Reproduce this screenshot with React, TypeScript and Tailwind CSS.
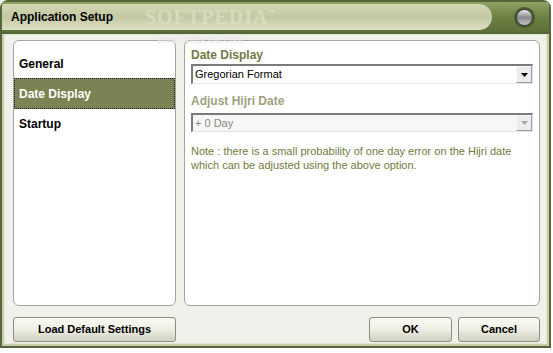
import React from "react";

const sans = { fontFamily: "'Liberation Sans', Arial, sans-serif" };

function Select({ value, disabled, h }: { value: string; disabled?: boolean; h: string }) {
  return (
    <div
      className={`flex ${h} items-stretch border border-t-2 border-l-2 border-t-[#7a7a7a] border-l-[#7a7a7a] border-b-[#e4e4e4] border-r-[#e4e4e4] ${
        disabled ? "bg-[#f7f7f5]" : "bg-white"
      }`}
    >
      <div
        className={`flex flex-1 items-center pl-[2px] text-[11px] ${disabled ? "text-[#8a8a8a]" : "text-black"}`}
      >
        {value}
      </div>
      <div className="flex w-[16px] items-center justify-center border border-[#f8f8f8] border-b-[#9a9a9a] border-r-[#9a9a9a] bg-[#ececec]">
        <svg width="7" height="4" viewBox="0 0 7 4">
          <path d="M0 0 H7 L3.5 4 Z" fill={disabled ? "#a8a8a8" : "#000"} />
        </svg>
      </div>
    </div>
  );
}

function Button({ children, className }: { children: React.ReactNode; className?: string }) {
  return (
    <div
      className={`flex h-[25px] items-center justify-center rounded-[3px] border border-[#8d8d82] bg-gradient-to-b from-[#fbfbf6] via-[#eeeee4] to-[#cfd0bf] text-[11px] font-bold text-black ${className ?? ""}`}
    >
      {children}
    </div>
  );
}

export default function App() {
  return (
    <div className="relative h-[353px] w-[553px] overflow-hidden bg-white" style={sans}>
      <div className="flex h-[348px] w-[551px] flex-col rounded-t-[8px] border-2 border-[#55673a] bg-[#c9cdaa]">
        {/* Title bar */}
        <div className="flex h-[30px] items-center bg-gradient-to-b from-[#8ea363] via-[#6c8143] to-[#5d7039] pr-[14px]">
          <div className="mr-[22px] flex h-[26px] flex-1 items-center rounded-tl-[6px] rounded-r-[40px] bg-gradient-to-b from-[#d4d8b6] via-[#c3c8a2] to-[#dde0c4] pl-[9px]">
            <span className="text-[12px] font-bold text-black">Application Setup</span>
            <span
              className="ml-[32px] text-[20px] font-bold tracking-[1px] text-[#e2e5cf] opacity-60"
              style={{ fontFamily: "'Liberation Serif', serif" }}
            >
              SOFTPEDIA
            </span>
            <span className="mb-[10px] text-[6px] text-[#e7e9d6]">™</span>
          </div>
          <div className="flex h-[21px] w-[21px] items-center justify-center rounded-full bg-[#4a5a2e]">
            <div className="h-[17px] w-[17px] rounded-full border border-[#3a3a3a] bg-gradient-to-b from-[#e8e8e8] via-[#8a8a8a] to-[#c8c8c8]" />
          </div>
        </div>
        {/* Body */}
        <div className="flex flex-1 flex-col border-t-2 border-[#55673a] px-[2px] pb-[2px]">
          <div className="flex flex-1 flex-col border border-[#e4e6d2] bg-[#f1f1ec] pl-[8px] pr-[6px] pt-[5px]">
            <div className="flex h-[266px] gap-[8px]">
              {/* Left nav */}
              <div className="flex w-[163px] flex-col rounded-[6px] border border-[#a4a4a4] bg-white pt-[12px]">
                <div className="flex h-[22px] items-center pl-[5px] text-[12px] font-bold text-black">General</div>
                <div className="mt-[3px] flex h-[31px] items-center border border-dotted border-[#1b1b3a] bg-[#7b8253] pl-[4px] text-[12px] font-bold text-white">
                  Date Display
                </div>
                <div className="flex h-[30px] items-center pl-[5px] text-[12px] font-bold text-black">Startup</div>
              </div>
              {/* Right content */}
              <div className="relative flex flex-1 flex-col rounded-[6px] border border-[#a4a4a4] bg-white px-[6px] pt-[7px]">
                <span className="absolute left-[-28px] top-[-6px] text-[10px] leading-[10px] text-[#e6e6e6]">
                  www.softpedia.com
                </span>
                <div className="text-[12px] font-bold leading-[14px] text-[#727a45]">Date Display</div>
                <div className="mt-[2px]">
                  <Select value="Gregorian Format" h="h-[20px]" />
                </div>
                <div className="mt-[10px] text-[12px] font-bold leading-[14px] text-[#9ea27e]">Adjust Hijri Date</div>
                <div className="mt-[5px]">
                  <Select value="+ 0 Day" disabled h="h-[19px]" />
                </div>
                <div className="mt-[12px] text-[11px] leading-[14px] text-[#727a3c]">
                  Note : there is a small probability of one day error on the Hijri date
                  <br />
                  which can be adjusted using the above option.
                </div>
              </div>
            </div>
            <div className="mt-[11px] flex">
              <Button className="w-[163px]">Load Default Settings</Button>
              <div className="flex-1" />
              <Button className="w-[83px]">OK</Button>
              <Button className="ml-[6px] w-[82px]">Cancel</Button>
            </div>
          </div>
        </div>
      </div>
    </div>
  );
}
